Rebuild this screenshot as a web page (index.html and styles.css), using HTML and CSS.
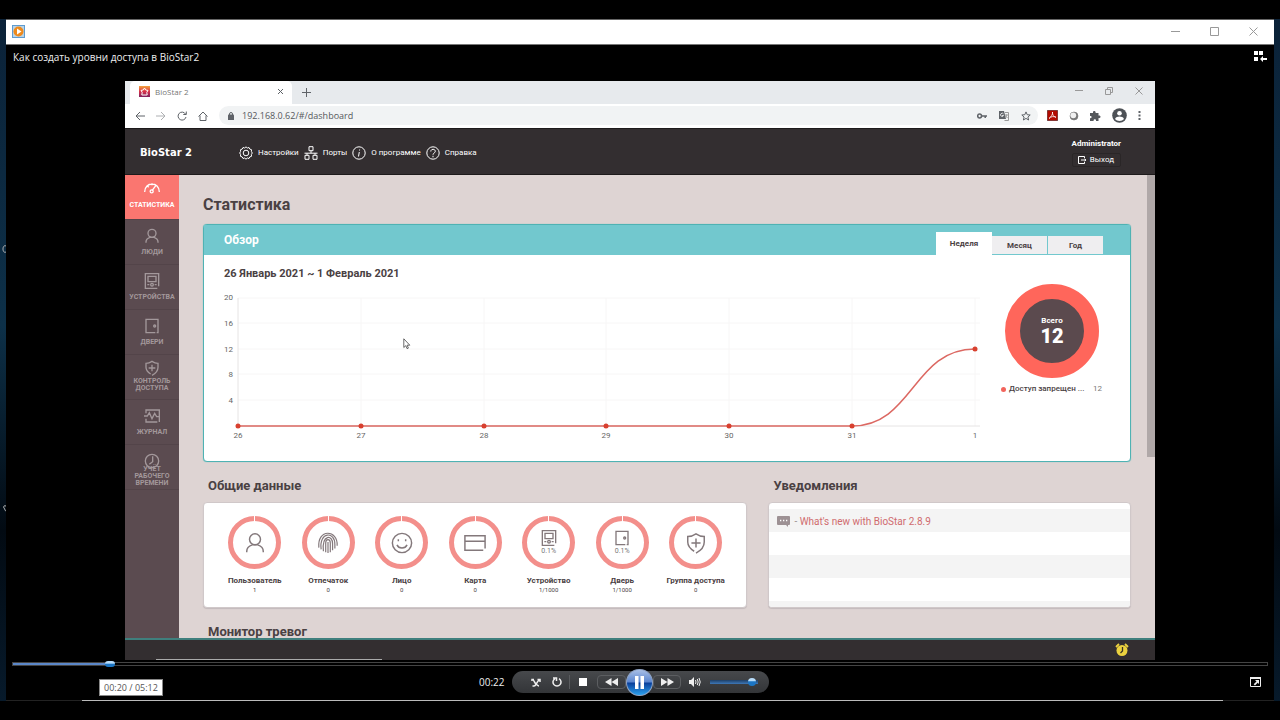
FILE: index.html
```html
<!DOCTYPE html>
<html lang="ru">
<head>
<meta charset="utf-8">
<meta name="viewport" content="width=device-width, initial-scale=1">
<title>Как создать уровни доступа в BioStar2</title>
<link rel="stylesheet" href="styles.css">
</head>
<body>
<svg class="defs" aria-hidden="true">
  <symbol id="i-user" viewBox="0 0 24 24"><circle cx="12" cy="8" r="6"/><path d="M3 22v-1c0-4 3-6 6-7h6c3 1 6 3 6 7v1"/></symbol>
  <symbol id="i-device" viewBox="0 0 24 24"><path d="M20 23H2V1h20v19"/><path d="M6 5h12v8H6z"/><circle cx="12" cy="17.500" r="2"/><path d="M5 17.500h3M16 17.500h3"/></symbol>
  <symbol id="i-door" viewBox="0 0 24 24"><path d="M17 22H3V2h18v20h-2"/><circle cx="16" cy="12" r="1.5"/></symbol>
  <symbol id="i-shield" viewBox="0 0 24 24"><path d="M10 21C5 18 3 15 3 11V5c4 0 6-1 9-3 3 2 5 3 9 3v6c0 5-3 9-9 12M12 7v10M7 12h10"/></symbol>
</svg>
<div class="desktop">
  <svg class="stray stray-a" viewBox="0 0 6 8" aria-hidden="true"><path d="M6 1C4 0 3 2 3 4s1 4 3 3"/></svg>
  <svg class="stray stray-b" viewBox="0 0 6 8" aria-hidden="true"><path d="M6 2C4 1 3 3 4 4s1 3 2 3"/></svg>
  <div class="player">
    <div class="titlebar">
      <svg class="app-icon" viewBox="0 0 13 13" aria-hidden="true"><rect x=".5" y=".5" width="12" height="12" fill="#b9d3e6" stroke="#5d9bd0"/><circle cx="6.5" cy="6.5" r="5" fill="#ee8a1c"/><path d="M5 3.5l4.500 3-4.500 3z" fill="#fff"/></svg>
      <div class="window-buttons">
        <button aria-label="Свернуть"><svg viewBox="0 0 9 9"><path d="M0 4.500h9"/></svg></button>
        <button aria-label="Развернуть"><svg viewBox="0 0 9 9"><path d="M.5.5h8v8h-8z"/></svg></button>
        <button aria-label="Закрыть"><svg viewBox="0 0 9 9"><path d="M.5.5l8 8M8.500.5l-8 8"/></svg></button>
      </div>
    </div>
    <div class="media-head">
      <h1>Как создать уровни доступа в BioStar2</h1>
      <button aria-label="Перейти в библиотеку"><svg width="13" height="11" viewBox="0 0 13 11"><path fill="#fff" d="M0 0h4v4H0zM5 0h4v4H5zM0 6h4v4H0zM6 8l3-3v2h4v2H9v2z"/></svg></button>
    </div>

    <div class="stage">
      <div class="browser">
        <div class="tabstrip">
          <div class="tab">
            <svg width="11" height="11" viewBox="0 0 11 11" aria-hidden="true"><defs><linearGradient id="fav" x1="0" y1="0" x2="0" y2="1"><stop offset="0" stop-color="#f3a43c"/><stop offset=".5" stop-color="#d8324a"/><stop offset="1" stop-color="#7d2060"/></linearGradient></defs><rect width="11" height="11" fill="url(#fav)"/><path d="M5.500 2l1.200 2 2.300.4-1.200 2 .4 2.600H2.800l.4-2.600L2 4.400 4.300 4z" fill="none" stroke="#fff"/></svg>
            <span>BioStar 2</span>
            <button aria-label="Закрыть вкладку"><svg width="7" height="7" viewBox="0 0 7 7"><path d="M1 1l5 5M6 1L1 6"/></svg></button>
          </div>
          <button class="new-tab" aria-label="Новая вкладка"><svg width="9" height="9" viewBox="0 0 9 9"><path d="M4.500 0v9M0 4.500h9"/></svg></button>
          <div class="browser-buttons">
            <button aria-label="Свернуть"><svg width="8" height="8" viewBox="0 0 8 8"><path d="M0 3.500h8"/></svg></button>
            <button aria-label="Восстановить"><svg width="8" height="8" viewBox="0 0 8 8"><path d="M.5 2.500h5v5h-5zM2.500 2V.5h5v5H6"/></svg></button>
            <button aria-label="Закрыть"><svg width="8" height="8" viewBox="0 0 8 8"><path d="M.5.5l7 7M7.500.5l-7 7"/></svg></button>
          </div>
        </div>
        <div class="toolbar">
          <button aria-label="Назад"><svg width="10" height="10" viewBox="0 0 10 10"><path d="M10 5H1M5 1L1 5l4 4"/></svg></button>
          <button class="off" aria-label="Вперёд"><svg width="10" height="10" viewBox="0 0 10 10"><path d="M0 5h9M5 1l4 4-4 4"/></svg></button>
          <button aria-label="Обновить"><svg width="10" height="10" viewBox="0 0 10 10"><path d="M8.500 3A4 4 0 1 0 9 6M9.300.5v3h-3"/></svg></button>
          <button aria-label="Домой"><svg width="10" height="10" viewBox="0 0 10 10"><path d="M.5 5.500L5 1l4.500 4.500M2 4.500v5h6v-5"/></svg></button>
          <div class="omnibox">
            <svg width="6" height="8" viewBox="0 0 6 8" aria-hidden="true"><rect y="3" width="6" height="5" rx=".6" fill="#5f6368"/><path d="M1.500 3V2a1.500 1.500 0 0 1 3 0v1"/></svg>
            <input type="text" aria-label="Адресная строка" value="192.168.0.62/#/dashboard">
            <button aria-label="Пароли"><svg width="10" height="6" viewBox="0 0 10 6"><circle cx="2.600" cy="3" r="1.900" stroke-width="1.500"/><path d="M4.500 3H10M8.200 3v2" stroke-width="1.500"/></svg></button>
            <button aria-label="Перевести"><svg width="10" height="10" viewBox="0 0 10 10"><path d="M0 0h5l2 8H0z" fill="#5f6368" stroke="none"/><path d="M6 1.500h3.500v8h-4M6 4h3M7.500 3.500c0 2-1 3-1.500 3.500M6.500 5l2 2" stroke="#999"/><path d="M4.500 3A1.600 1.600 0 1 0 4.600 4.500H3" stroke="#fff" stroke-width=".8"/></svg></button>
            <button aria-label="В закладки"><svg width="10" height="10" viewBox="0 0 10 10"><path d="M5 .9l1.200 2.800 3 .3-2.300 2 .7 3L5 7.400 2.400 9l.7-3L.8 4l3-.3z"/></svg></button>
          </div>
          <div class="extensions">
            <button aria-label="Acrobat"><svg width="11" height="11" viewBox="0 0 11 11"><rect width="11" height="11" rx="1" fill="#b30b00"/><path d="M5.500 2c.6 2-1.500 5-3.500 6.500C3 6.500 8 6 9 7.300 7 7.300 5 4.500 5.500 2z" stroke="#fff" stroke-width=".8"/></svg></button>
            <button aria-label="Расширение"><svg width="10" height="10" viewBox="0 0 10 10"><circle cx="5" cy="5" r="4" fill="#777" stroke="#777" stroke-width=".6"/><circle cx="4.300" cy="4.300" r="2.900" fill="#f1f1f1" stroke="none"/></svg></button>
            <button aria-label="Расширения"><svg width="11" height="10" viewBox="0 0 11 10"><path fill="#55585c" stroke="none" d="M0 2h3c-.5-2.600 3-2.600 2.600 0H8.500v2.500c2.700-.4 2.700 3 0 2.600V10H6c.4-2.300-2.700-2.300-2.400 0H0V7.200c2.200.3 2.200-2.500 0-2.200z"/></svg></button>
            <button aria-label="Профиль"><svg width="15" height="15" viewBox="0 0 15 15"><circle cx="7.500" cy="7.500" r="7.300" fill="#4d5156" stroke="none"/><circle cx="7.500" cy="5.300" r="2.300" fill="#fff" stroke="none"/><path d="M3 11c1.500-3.200 7.500-3.200 9 0-2 2.500-7 2.500-9 0z" fill="#fff" stroke="none"/></svg></button>
            <button aria-label="Меню"><svg width="3" height="11" viewBox="0 0 3 11"><path fill="#5f6368" stroke="none" d="M.5 1h2v2h-2zM.5 4.500h2v2h-2zM.5 8h2v2h-2z"/></svg></button>
          </div>
        </div>

        <header class="app-head">
          <div class="logo">BioStar 2</div>
          <nav class="app-nav">
            <a href="#settings"><svg viewBox="0 0 14 14"><path d="M7 .8l1.300 1.200 1.700-.5.8 1.600 1.700.6-.1 1.800L13.300 7l-.9 1.500.1 1.800-1.700.6-.8 1.600-1.700-.5L7 13.200 5.700 12l-1.700.5-.8-1.600-1.700-.6.1-1.800L.7 7l.9-1.500-.1-1.800 1.700-.6.8-1.600 1.700.5z"/><circle cx="7" cy="7" r="2.800"/></svg>Настройки</a>
            <a href="#ports"><svg viewBox="0 0 14 14"><path d="M5 .7h4v4H5zM7 4.700v2.500M.5 7.200h13M3 7.200v2M11 7.200v2M1 9.300h4v4H1zM9 9.300h4v4H9z"/></svg>Порты</a>
            <a href="#about"><svg viewBox="0 0 14 14"><circle cx="7" cy="7" r="6.200"/><path d="M7.300 6L6.500 10.500M7.600 3.500l-.1 1"/></svg>О программе</a>
            <a href="#help"><svg viewBox="0 0 14 14"><circle cx="7" cy="7" r="6.200"/><path d="M4.800 5.500c0-3 4.500-2.800 4.500-.2C9.300 7 7 7 7 8.700M7 9.800v1.500"/></svg>Справка</a>
          </nav>
          <div class="account">
            <strong>Administrator</strong>
            <button><svg width="8" height="8" viewBox="0 0 8 8"><path d="M6.500 2V.5h-6v7h6V6M3 4h5M6.500 2.800L8 4 6.500 5.200"/></svg>Выход</button>
          </div>
        </header>

        <div class="app-body">
          <nav class="sidebar">
            <a class="active" href="#stat"><svg viewBox="0 0 24 24"><path d="M1 18C1 2 23 2 23 18M5 9l2 2M12 5v3"/><path d="M12 16l6-8"/><circle cx="11.500" cy="17" r="2.300"/></svg>СТАТИСТИКА</a>
            <a href="#people"><svg><use href="#i-user"/></svg>ЛЮДИ</a>
            <a href="#devices"><svg><use href="#i-device"/></svg>УСТРОЙСТВА</a>
            <a href="#doors"><svg><use href="#i-door"/></svg>ДВЕРИ</a>
            <a href="#access" class="two"><svg><use href="#i-shield"/></svg>КОНТРОЛЬ ДОСТУПА</a>
            <a href="#log"><svg viewBox="0 0 24 24"><path d="M3 8V3h20v18M20 21H3v-5M0 12h5l3-5 4 9 4-8 3 5h3"/></svg>ЖУРНАЛ</a>
            <a href="#time" class="three"><svg viewBox="0 0 24 24"><circle cx="12" cy="12" r="10"/><path d="M13 5v8l-5 4"/></svg>УЧЁТ РАБОЧЕГО ВРЕМЕНИ</a>
          </nav>

          <main class="content">
            <h2 class="page-title">Статистика</h2>
            <section class="overview">
              <div class="overview-head">
                <h3>Обзор</h3>
                <div class="range" role="tablist">
                  <button role="tab" aria-selected="true">Неделя</button>
                  <button role="tab" aria-selected="false">Месяц</button>
                  <button role="tab" aria-selected="false">Год</button>
                </div>
              </div>
              <p class="period">26 Январь 2021 ~ 1 Февраль 2021</p>
              <div class="overview-body">
                <svg class="chart" viewBox="0 0 770 152" role="img" aria-label="События по дням">
                  <path class="grid" d="M23 8h742M23 33h742M23 59h742M23 84h742M23 110h742M146 8v128M269 8v128M391 8v128M514 8v128M637 8v128M760 8v128"/>
                  <path class="axis" d="M23 8v128h742"/>
                  <g class="y-labels"><text x="18" y="10">20</text><text x="18" y="36">16</text><text x="18" y="62">12</text><text x="18" y="87">8</text><text x="18" y="113">4</text></g>
                  <g class="x-labels"><text x="23" y="148">26</text><text x="146" y="148">27</text><text x="269" y="148">28</text><text x="391" y="148">29</text><text x="514" y="148">30</text><text x="637" y="148">31</text><text x="760" y="148">1</text></g>
                  <path class="line" d="M23 136H637C698 136 698 59 760 59"/>
                  <g class="dots"><circle cx="23" cy="136" r="2.500"/><circle cx="146" cy="136" r="2.500"/><circle cx="269" cy="136" r="2.500"/><circle cx="391" cy="136" r="2.500"/><circle cx="514" cy="136" r="2.500"/><circle cx="637" cy="136" r="2.500"/><circle cx="760" cy="59" r="2.500"/></g>
                </svg>
                <div class="total">
                  <div class="donut"><span>Всего</span><b>12</b></div>
                  <div class="legend"><i></i><span>Доступ запрещен ...</span><em>12</em></div>
                </div>
              </div>
            </section>

            <div class="lower">
              <section class="summary">
                <h3>Общие данные</h3>
                <ul>
                  <li><div class="ring"><svg class="big"><use href="#i-user"/></svg></div><b>Пользователь</b><span>1</span></li>
                  <li><div class="ring"><svg class="big print" viewBox="0 0 24 24"><path d="M2 17C0-4 23-3 22 15M4.500 19C2-1 20-1 19.500 14v4M7 21C5 2 17.500 3 17 13v7M9.500 22V12c0-5 5-5 5 0v10M12 23V11"/></svg></div><b>Отпечаток</b><span>0</span></li>
                  <li><div class="ring"><svg class="big" viewBox="0 0 24 24"><circle cx="12" cy="12" r="10.500"/><path d="M6.500 14c2 4.500 9 4.500 11 0M8 8v2M16 8v2"/></svg></div><b>Лицо</b><span>0</span></li>
                  <li><div class="ring"><svg class="big" viewBox="0 0 24 24"><path d="M21 20H1V4h22v14M1 10h22"/></svg></div><b>Карта</b><span>0</span></li>
                  <li><div class="ring"><svg><use href="#i-device"/></svg><small>0.1%</small></div><b>Устройство</b><span>1/1000</span></li>
                  <li><div class="ring"><svg><use href="#i-door"/></svg><small>0.1%</small></div><b>Дверь</b><span>1/1000</span></li>
                  <li><div class="ring"><svg class="big"><use href="#i-shield"/></svg></div><b>Группа доступа</b><span>0</span></li>
                </ul>
              </section>
              <section class="notices">
                <h3>Уведомления</h3>
                <ul>
                  <li><svg width="13" height="11" viewBox="0 0 13 11" aria-hidden="true"><path fill="#9d9194" d="M1 0h11q1 0 1 1v7q0 1-1 1h-1v2L9 9H1Q0 9 0 8V1q0-1 1-1z"/><path d="M3 4.500h1.300M6 4.500h1.300M9 4.500h1.300" stroke="#fff" stroke-width="1.300"/></svg><span>- <a href="#news">What's new with BioStar 2.8.9</a></span></li>
                  <li></li><li></li><li></li><li></li>
                </ul>
              </section>
            </div>
            <h3 class="alarms">Монитор тревог</h3>
          </main>
          <div class="scrollbar" aria-hidden="true"><i></i></div>
          <svg class="cursor" viewBox="0 0 8 12" aria-hidden="true"><path d="M.8.8v8.700l2-1.800 1.300 3 1.300-.6-1.300-2.900h2.700z" fill="#fff" stroke="#444" stroke-width=".8"/></svg>
        </div>
        <footer class="statusbar">
          <svg width="14" height="14" viewBox="0 0 14 14" aria-hidden="true"><circle cx="7" cy="7.500" r="5.500" fill="#ecd23f"/><path d="M1 4l3-3M13 4l-3-3" stroke="#ecd23f" stroke-width="1.800"/><path d="M7.500 4v4L5.500 10" stroke="#3a3224" stroke-width="1.300" fill="none"/></svg>
        </footer>
      </div>
    </div>

    <div class="seek">
      <input type="range" min="0" max="312" value="23" aria-label="Позиция">
      <output class="seek-tip">00:20 / 05:12</output>
    </div>
    <div class="controls">
      <time>00:22</time>
      <div class="pill">
        <button aria-label="Случайный порядок"><svg width="10" height="9" viewBox="0 0 10 9"><path d="M1.500 8h1.500C5 8 5 5 8 2M2 2c1 0 1.500 3 3 4s1.500 2 3 2M1 3V1.500h2M6.500 1.500H9V4" fill="none" stroke="#eee" stroke-width="1.500"/></svg></button>
        <button aria-label="Повтор"><svg width="10" height="10" viewBox="0 0 10 10"><path d="M3 1.600A4 4 0 1 0 7 1.600M1 1h3.500v3" fill="none" stroke="#eee" stroke-width="1.500"/></svg></button>
        <i class="divider"></i>
        <button class="stop" aria-label="Стоп"><svg width="8" height="8" viewBox="0 0 8 8"><path d="M0 0h8v8H0z" fill="#fff"/></svg></button>
        <button class="skip back" aria-label="Назад"><svg width="13" height="8" viewBox="0 0 13 8"><path d="M6.500 0v8L0 4zM13 0v8L6.500 4z" fill="#eee"/></svg></button>
        <button class="play" aria-label="Пауза"><svg width="9" height="13" viewBox="0 0 9 13"><path d="M0 0h3.500v13H0zM5.500 0H9v13H5.500z" fill="#fff"/></svg></button>
        <button class="skip next" aria-label="Вперёд"><svg width="13" height="8" viewBox="0 0 13 8"><path d="M0 0v8l6.500-4zM6.500 0v8L13 4z" fill="#eee"/></svg></button>
        <button class="mute" aria-label="Звук"><svg width="12" height="10" viewBox="0 0 12 10"><path d="M0 3h2l3-3v10L2 7H0z" fill="#eee"/><path d="M6.500 3q1 2 0 4M8.300 2q1.700 3 0 6M10 1q2.500 4 0 8" fill="none" stroke="#eee"/></svg></button>
        <input type="range" min="0" max="100" value="95" aria-label="Громкость">
      </div>
      <button class="full" aria-label="Во весь экран"><svg width="11" height="10" viewBox="0 0 11 10"><path d="M.5.5h10v9H.5z" fill="none" stroke="#eee"/><path d="M0 0h11v2H0zM9 3v4L7.700 5.700 5 8.500 3.700 7.300l2.800-2.800L5 3z" fill="#eee"/></svg></button>
    </div>
  </div>
</div>
</body>
</html>
```

FILE: styles.css
```css
* { box-sizing: border-box; margin: 0; padding: 0; }
html, body { height: 100%; }
body { background: #000; font-family: Roboto, "Liberation Sans", sans-serif; color: #4a4143; }
button { border: 0; background: none; font: inherit; color: inherit; display: flex; align-items: center; justify-content: center; }
a { color: inherit; text-decoration: none; }
ul { list-style: none; }
svg { display: block; flex: none; }
.defs { position: absolute; width: 0; height: 0; }

.desktop { position: relative; min-height: 100%; display: flex; flex-direction: column; padding: 0 6px; border-top: 19px solid #000; border-bottom: 19px solid #000; background: linear-gradient(#0b2238, #0d3048 45%, #020a12 75%, #071a2b); }
.stray { position: absolute; left: 0; width: 6px; height: 8px; fill: none; stroke: #bbb; }
.stray-a { top: 226px; }
.stray-b { top: 485px; }
.player { flex: 1; display: flex; flex-direction: column; background: linear-gradient(90deg, #222 6%, #bbb 6%, #bbb 96%, #222 96%) bottom / 100% 1px no-repeat #000; padding-bottom: 1px; }
.titlebar { height: 26px; background: #fff; border-top: 1px solid #666; border-bottom: 1px solid #777; display: flex; align-items: center; justify-content: space-between; padding: 0 16px 2px 6px; }
.app-icon { width: 13px; height: 13px; }
.window-buttons { display: flex; gap: 30px; }
.window-buttons svg { width: 9px; height: 9px; fill: none; stroke: #999; }
.media-head { height: 36px; display: flex; justify-content: space-between; align-items: flex-start; padding: 5px 7px; color: #eee; font-family: "Open Sans", sans-serif; }
.media-head h1 { font-size: 10px; line-height: 14px; font-weight: 400; }
.media-head button { padding-top: 1px; }

.stage { flex: 1; display: flex; padding: 0 119px; }
.browser { flex: 1; min-width: 0; display: flex; flex-direction: column; background: #fff; }
.browser svg { fill: none; stroke-width: 1; }
.tabstrip { height: 23px; background: #e7eaed; display: flex; align-items: center; color: #777; font: 8px "Open Sans", sans-serif; }
.tabstrip button svg, .toolbar button svg, .omnibox > svg { stroke: #5f6368; }
.tab { align-self: stretch; width: 162px; margin-left: 5px; background: #fff; border-radius: 5px 5px 0 0; display: flex; align-items: center; gap: 5px; padding: 0 8px 2px 9px; }
.tab button { margin-left: auto; }
.new-tab { margin-left: 10px; }
.browser-buttons { margin-left: auto; display: flex; gap: 22px; padding: 0 12px 4px 0; }
.browser-buttons button svg { stroke: #999; }
.toolbar { height: 24px; display: flex; align-items: center; gap: 11px; padding: 0 14px 1px 10px; }
.toolbar .off { opacity: .5; }
.omnibox { flex: 1; height: 19px; border-radius: 10px; background: #f1f3f4; display: flex; align-items: center; gap: 12px; padding: 0 7px 0 9px; }
.omnibox input { flex: 1; min-width: 0; border: 0; background: none; margin-left: -4px; font: 9px "Open Sans", sans-serif; color: #55585c; }
.extensions { display: flex; align-items: center; gap: 11px; margin-left: -2px; }

.app-head { height: 47px; background: #332e30; border-top: 1px solid #1d1a1b; border-bottom: 1px solid #1d1a1b; color: #fff; display: flex; align-items: center; padding: 2px 34px 0 15px; }
.logo { width: 99px; font: bold 10px "DejaVu Sans", sans-serif; }
.app-nav { display: flex; gap: 5px; font-size: 8px; }
.app-nav a { display: flex; align-items: center; gap: 5px; }
.app-nav svg { width: 14px; height: 14px; stroke: #fff; }
.account { margin-left: auto; display: flex; flex-direction: column; align-items: flex-end; gap: 3px; font-size: 8px; line-height: 12px; }
.account button { gap: 4px; padding: 0 6px 0 5px; border: 1px solid #2a2627; border-radius: 2px; }
.account svg { stroke: #fff; }

.app-body { position: relative; flex: 1 0 0; min-height: 0; display: flex; overflow: hidden; }
.sidebar { width: 54px; background: #5b4b50; color: #a3989b; font-size: 7px; line-height: 7px; font-weight: 700; text-align: center; }
.sidebar a { height: 45px; display: flex; flex-direction: column; align-items: center; padding: 8px 4px 0; gap: 5px; border-bottom: 1px solid #534449; }
.sidebar svg { width: 16px; height: 16px; stroke: #a3989b; stroke-width: 2; }
.sidebar .active { background: #fa7670; color: #fff; padding-top: 5px; gap: 6px; }
.sidebar .active svg { stroke: #fff; }
.sidebar .two { gap: 2px; padding-top: 5px; }
.sidebar .three { gap: 0; }
.sidebar .three svg { margin-bottom: -3px; }

.content { flex: 1; min-width: 0; background: #ded4d3; padding: 18px 16px 0 24px; }
.page-title { font-size: 16px; line-height: 24px; font-weight: 700; }
.overview { margin-top: 7px; background: #fff; border: 1px solid #4fb2b3; border-radius: 4px; box-shadow: 0 0 1px #4fb2b3; }
.overview-head { height: 30px; background: #72c8ce; display: flex; align-items: center; justify-content: space-between; padding: 0 26px 0 20px; color: #fff; }
.overview-head h3 { font-size: 12px; }
.range { align-self: flex-end; display: flex; align-items: flex-end; font-size: 8px; font-weight: 700; color: #4a4143; }
.range button { width: 56px; height: 20px; background: #efeef0; border: 1px solid #72c8ce; border-left: 0; font-weight: 700; }
.range button[aria-selected="true"] { height: 23px; background: #fff; border: 0; }
.period { font-size: 11px; line-height: 14px; font-weight: 700; padding: 12px 20px 0; }
.overview-body { display: flex; align-items: flex-start; padding: 2px 0 19px 11px; }
.chart { flex: 1; min-width: 0; margin-top: 7px; font-size: 8px; }
.chart text { fill: #666; }
.y-labels { text-anchor: end; }
.x-labels { text-anchor: middle; }
.grid { stroke: #f7f6f6; }
.axis { stroke: #e6e4e4; }
.line { stroke: #dc6862; stroke-width: 1.500; }
.dots { fill: #d8402f; }
.total { width: 145px; padding-left: 16px; }
.donut { width: 94px; height: 94px; margin: 1px 0 0 4px; border: 15px solid #ff665b; border-radius: 50%; background: #5b4a4e; color: #fff; display: flex; flex-direction: column; align-items: center; justify-content: center; font-size: 8px; line-height: 9px; font-weight: 700; }
.donut b { font-size: 20px; line-height: 22px; }
.legend { display: flex; align-items: center; gap: 3px; margin-top: 5px; padding-right: 28px; font-size: 8px; line-height: 12px; }
.legend span { font-weight: 500; }
.legend i { width: 5px; height: 5px; border-radius: 50%; background: #f2645c; }
.legend em { margin-left: auto; font-style: normal; color: #777; }

.lower { display: grid; grid-template-columns: 545fr 363fr; gap: 21px; margin-top: 15px; }
.lower h3, .alarms { font-size: 13px; line-height: 18px; padding-left: 5px; }
.lower ul { margin-top: 7px; height: 106px; background: #fff; border: 1px solid #d0c8c9; border-radius: 4px; box-shadow: 0 1px 1px #c3babc; }
.summary ul { display: grid; grid-template-columns: repeat(7, 1fr); padding: 13px 14px 0; }
.summary li { display: flex; flex-direction: column; align-items: center; font-size: 8px; white-space: nowrap; min-width: 0; }
.ring { position: relative; width: 53px; height: 53px; border: 5px solid #f38f8b; border-radius: 50%; display: flex; flex-direction: column; align-items: center; justify-content: center; color: #777; }
.ring::before { content: ""; position: absolute; top: -5px; left: 21px; width: 1px; height: 5px; background: #fff; }
.ring svg { width: 16px; height: 16px; stroke: #83787b; stroke-width: 2; }
.ring .big { width: 22px; height: 22px; stroke-width: 1.600; }
.ring .print { stroke-width: 1.300; }
.ring small { font-size: 7px; line-height: 10px; }
.summary b { margin-top: 6px; line-height: 11px; font-weight: 700; }
.summary li > span { font-size: 6px; line-height: 8px; }
.notices ul { padding-top: 6px; overflow: hidden; }
.notices li { height: 23px; display: flex; align-items: center; gap: 4px; padding: 2px 0 0 8px; font-size: 10px; color: #9d9194; }
.notices li:nth-child(odd) { background: #f4f4f4; }
.notices a { color: #d06b6e; }
.alarms { margin-top: 15px; }
.scrollbar { width: 8px; background: #ded4d3; }
.scrollbar i { display: block; height: 61%; background: #b0a8a8; }
.cursor { position: absolute; left: 27%; top: 163px; width: 8px; height: 12px; }
.statusbar { height: 22px; background: linear-gradient(90deg, transparent 3%, #aaa 3%, #aaa 25%, transparent 25%) bottom / 100% 1px no-repeat #332e30; border-top: 2px solid #3f7f7d; display: flex; align-items: center; justify-content: flex-end; padding-right: 26px; }

.seek { position: relative; height: 7px; padding: 0 6px; display: flex; align-items: center; }
input[type="range"] { appearance: none; display: block; width: 100%; height: 4px; background: #000; border: 1px solid #444; }
.seek input { background: linear-gradient(90deg, #5b87c9 8%, #000 8%); }
input[type="range"]::-webkit-slider-thumb { appearance: none; width: 10px; height: 6px; border-radius: 3px; background: linear-gradient(#b7dcfa 40%, #1b75c4 45%); }
.seek-tip { position: absolute; left: 93px; top: 19px; padding: 0 4px; background: #fff; border: 1px solid #888; color: #555; font: 9px/15px "Open Sans", sans-serif; white-space: nowrap; }
.controls { height: 33px; display: grid; grid-template-columns: 1fr auto 1fr; align-items: center; padding-bottom: 3px; }
.controls time { justify-self: end; margin-right: 7px; color: #eee; font: 10px "Open Sans", sans-serif; }
.pill { width: 257px; height: 22px; border-radius: 11px; background: linear-gradient(#47494c, #333538); display: flex; align-items: center; padding: 0 10px 0 19px; }
.pill .divider { width: 1px; height: 14px; background: #5a5c5f; margin: 0 0 0 7px; }
.pill button + button { margin-left: 11px; }
.pill .stop { margin-left: 10px; }
.pill .skip { width: 30px; height: 14px; border: 1px solid #5c5e61; border-radius: 4px; }
.pill .stop + .back { margin-left: 10px; }
.pill .back + .play { width: 27px; height: 27px; margin: 0; border: 1px solid #8fa3c4; border-radius: 50%; background: linear-gradient(#a9bfe6, #5b86cf 48%, #0a3f9a 52%, #2aa0ee); }
.pill .play + .next { margin-left: 0; }
.pill .next + .mute { margin: 0 9px 0 8px; }
.pill input { width: 48px; height: 4px; border: 0; background: linear-gradient(#1e3f66, #3e78b8); }
.pill input::-webkit-slider-thumb { width: 8px; height: 8px; border-radius: 50%; }
.controls .full { justify-self: end; margin-right: 13px; }
```
